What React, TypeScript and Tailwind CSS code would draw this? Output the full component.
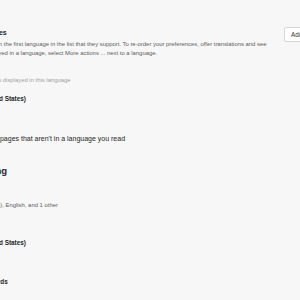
export default function App() {
  return (
    <div className="w-[300px] h-[300px] overflow-hidden bg-[#f7f7f7] font-['Liberation_Sans',Arial,sans-serif]">
      <div className="ml-[-58px] w-[460px]">
        {/* Preferred languages */}
        <div className="flex items-start pt-[27px]">
          <div className="w-[342px] shrink-0 pt-[1px]">
            <h2 className="ml-[-3px] text-[7px] leading-[10px] font-bold text-[#262626] whitespace-nowrap">
              Preferred languages
            </h2>
            <p className="mt-[2px] text-[5.9px] leading-[9px] text-[#5c5c5c] whitespace-nowrap">
              <span className="block">
                Websites will appear in the first language in the list that they support. To re-order your
                preferences, offer translations and see
              </span>
              <span className="block">
                Microsoft Edge displayed in a language, select More actions ... next to a language.
              </span>
            </p>
          </div>
          <button className="shrink-0 h-[15px] px-[6px] bg-white border border-[#d6d6d6] rounded-[2px] text-[6.3px] text-[#333333] whitespace-nowrap">
            Add languages
          </button>
        </div>

        {/* Language list */}
        <div className="mt-[9px] ml-[14px]">
          <div className="text-[6.4px] leading-[9px] font-bold text-[#262626] whitespace-nowrap">English</div>
          <div className="text-[5.9px] leading-[9px] text-[#9e9e9e] whitespace-nowrap">
            Microsoft Edge is displayed in this language
          </div>
          <div className="mt-[9px] text-[6.4px] leading-[9px] font-bold text-[#262626] whitespace-nowrap">
            English (United States)
          </div>
        </div>

        <div className="mt-[31px] ml-[4px] text-[7px] leading-[9px] text-[#262626] whitespace-nowrap">
          Offer to translate pages that aren't in a language you read
        </div>

        {/* Check spelling */}
        <h2 className="mt-[21px] ml-[-2px] text-[9.5px] leading-[14px] font-bold text-[#262626] whitespace-nowrap">
          Check spelling
        </h2>
        <div className="mt-[23px] text-[5.9px] leading-[9px] text-[#5c5c5c] whitespace-nowrap">
          English (United States), English, and 1 other
        </div>
        <div className="mt-[28px] ml-[14px] text-[6.4px] leading-[9px] font-bold text-[#262626] whitespace-nowrap">
          English (United States)
        </div>
        <div className="mt-[30px] text-[6.4px] leading-[9px] font-bold text-[#262626] whitespace-nowrap">
          Add or remove words
        </div>
      </div>
    </div>
  );
}
